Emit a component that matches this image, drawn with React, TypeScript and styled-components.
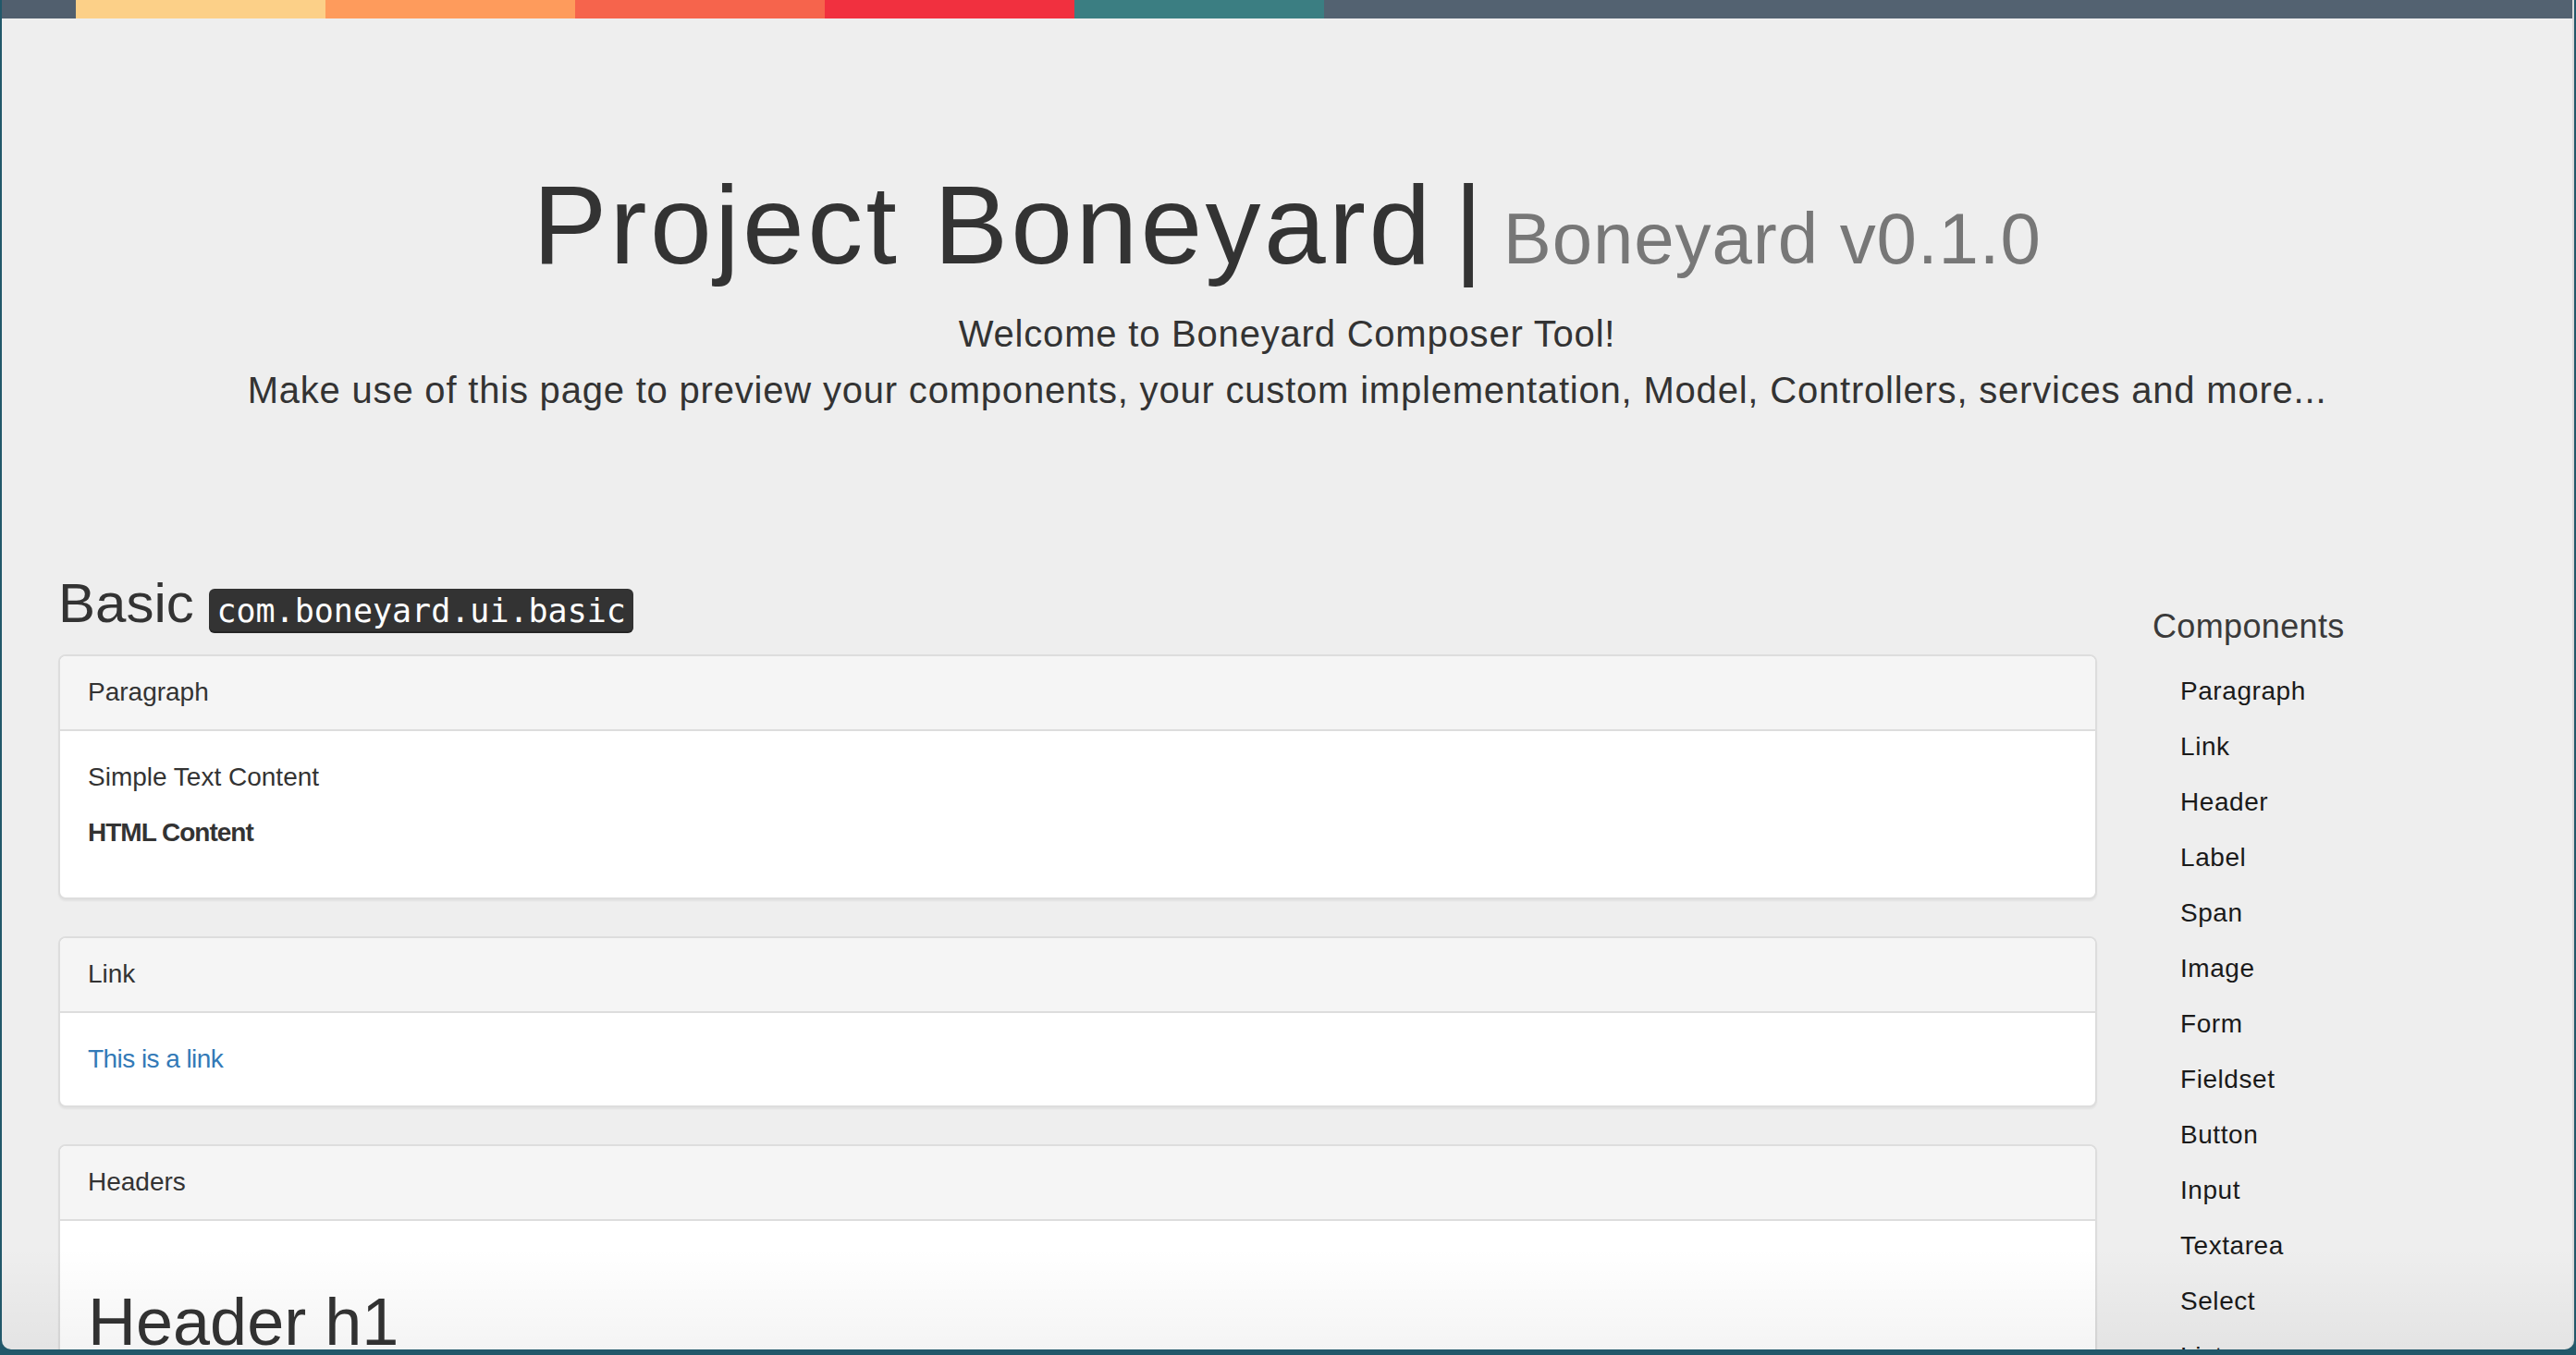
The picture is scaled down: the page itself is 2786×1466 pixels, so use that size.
import React from 'react';
import styled, { createGlobalStyle } from 'styled-components';

const GlobalStyle = createGlobalStyle`
  * { box-sizing: border-box; }
  html, body {
    margin: 0;
    padding: 0;
    height: 1466px;
    overflow: hidden;
    background: #22586a;
  }
  #root { height: 1466px; }
`;

const Window = styled.div`
  position: relative;
  margin-left: 2px;
  width: 2782px;
  height: 1460px;
  background: #eeeeee;
  border-right: 2px solid #d9d9d9;
  border-bottom-left-radius: 10px;
  border-bottom-right-radius: 10px;
  overflow: hidden;
  font-family: "Liberation Sans", Arial, sans-serif;
  color: #333333;
`;

const TopBar = styled.div`
  display: flex;
  height: 20px;
`;

const Segment = styled.div<{ $color: string; $width?: number }>`
  background: ${(p) => p.$color};
  ${(p) => (p.$width ? `width: ${p.$width}px; flex: none;` : 'flex: 1;')}
`;

const Hero = styled.header`
  text-align: center;
  padding-top: 157px;
`;

const Title = styled.h1`
  margin: 0;
  font-size: 120px;
  line-height: 132px;
  font-weight: 400;
  color: #333333;
  white-space: nowrap;
`;

const TitleMain = styled.span`
  letter-spacing: 0.028em;
`;

const Pipe = styled.span`
  margin: 0 22px;
`;

const TitleSmall = styled.small`
  font-size: 65%;
  letter-spacing: 0.012em;
  color: #777777;
`;

const Lead = styled.p`
  margin: 7px 0 0;
  font-size: 40px;
  line-height: 61px;
  letter-spacing: 0.02em;
  color: #333333;
`;

const Content = styled.div`
  display: grid;
  grid-template-columns: 5fr 1fr;
  padding: 127px 31px 0;
`;

const MainCol = styled.main`
  padding: 0 30px;
  min-width: 0;
`;

const SectionTitle = styled.h2`
  margin: 40px 0 22px;
  font-size: 60px;
  line-height: 66px;
  font-weight: 400;
  color: #333333;
`;

const Kbd = styled.kbd`
  font-family: "DejaVu Sans Mono", "Liberation Mono", monospace;
  font-size: 35px;
  line-height: 1;
  padding: 4px 8px;
  color: #ffffff;
  background: #333333;
  border-radius: 6px;
  box-shadow: inset 0 -2px 0 rgba(0, 0, 0, 0.25);
`;

const Panel = styled.section`
  background: #ffffff;
  border: 2px solid #dddddd;
  border-radius: 8px;
  box-shadow: 0 2px 2px rgba(0, 0, 0, 0.05);
  margin-bottom: 40px;
  overflow: hidden;
`;

const PanelHeading = styled.div`
  padding: 19px 30px 20px;
  background: #f5f5f5;
  border-bottom: 2px solid #dddddd;
  font-size: 28px;
  line-height: 40px;
  color: #333333;
`;

const PanelBody = styled.div`
  padding: 30px;
`;

const Para = styled.p<{ $bold?: boolean }>`
  margin: 0 0 20px;
  font-size: 28px;
  line-height: 40px;
  font-weight: ${(p) => (p.$bold ? 700 : 400)};
  letter-spacing: ${(p) => (p.$bold ? '-1px' : 'normal')};
  color: #333333;
`;

const TextLink = styled.a`
  font-size: 28px;
  line-height: 40px;
  letter-spacing: -0.02em;
  color: #337ab7;
  text-decoration: none;
`;

const Heading = styled.div<{ $size: number }>`
  margin: 40px 0 20px;
  font-size: ${(p) => p.$size}px;
  line-height: 1.1;
  font-weight: 400;
  color: #333333;
`;

const Sidebar = styled.aside`
  padding: 0 30px;
`;

const SideTitle = styled.h4`
  margin: 78px 0 20px;
  font-size: 36px;
  line-height: 40px;
  font-weight: 400;
  letter-spacing: 0.01em;
  color: #3a3a3a;
`;

const NavList = styled.ul`
  list-style: none;
  margin: 0;
  padding: 0;
`;

const NavLink = styled.a`
  display: block;
  padding: 10px 30px;
  font-size: 28px;
  line-height: 40px;
  letter-spacing: 0.02em;
  color: #1a1a1a;
  text-decoration: none;
`;

const BottomShade = styled.div`
  position: absolute;
  left: 0;
  right: 0;
  bottom: 0;
  height: 110px;
  background: linear-gradient(to bottom, rgba(0, 0, 0, 0), rgba(0, 0, 0, 0.045));
  pointer-events: none;
`;

const segments: { color: string; width?: number }[] = [
  { color: '#515f6e', width: 80 },
  { color: '#fcd088', width: 270 },
  { color: '#fe9b5c', width: 270 },
  { color: '#f6644c', width: 270 },
  { color: '#f1303f', width: 270 },
  { color: '#3b7e82', width: 270 },
  { color: '#536271' },
];

const navItems = [
  'Paragraph',
  'Link',
  'Header',
  'Label',
  'Span',
  'Image',
  'Form',
  'Fieldset',
  'Button',
  'Input',
  'Textarea',
  'Select',
  'List',
  'Table',
];

export default function App() {
  return (
    <>
      <GlobalStyle />
      <Window>
        <TopBar>
          {segments.map((s, i) => (
            <Segment key={i} $color={s.color} $width={s.width} />
          ))}
        </TopBar>
        <Hero>
          <Title>
            <TitleMain>Project Boneyard</TitleMain>
            <Pipe>|</Pipe>
            <TitleSmall>Boneyard v0.1.0</TitleSmall>
          </Title>
          <Lead>
            Welcome to Boneyard Composer Tool!
            <br />
            Make use of this page to preview your components, your custom implementation, Model, Controllers, services and more...
          </Lead>
        </Hero>
        <Content>
          <MainCol>
            <SectionTitle>
              Basic <Kbd>com.boneyard.ui.basic</Kbd>
            </SectionTitle>
            <Panel>
              <PanelHeading>Paragraph</PanelHeading>
              <PanelBody>
                <Para>Simple Text Content</Para>
                <Para $bold>HTML Content</Para>
              </PanelBody>
            </Panel>
            <Panel>
              <PanelHeading>Link</PanelHeading>
              <PanelBody>
                <TextLink href="#">This is a link</TextLink>
              </PanelBody>
            </Panel>
            <Panel>
              <PanelHeading>Headers</PanelHeading>
              <PanelBody>
                <Heading $size={72}>Header h1</Heading>
                <Heading $size={60}>Header h2</Heading>
              </PanelBody>
            </Panel>
          </MainCol>
          <Sidebar>
            <SideTitle>Components</SideTitle>
            <NavList>
              {navItems.map((n) => (
                <li key={n}>
                  <NavLink href="#">{n}</NavLink>
                </li>
              ))}
            </NavList>
          </Sidebar>
        </Content>
        <BottomShade />
      </Window>
    </>
  );
}
